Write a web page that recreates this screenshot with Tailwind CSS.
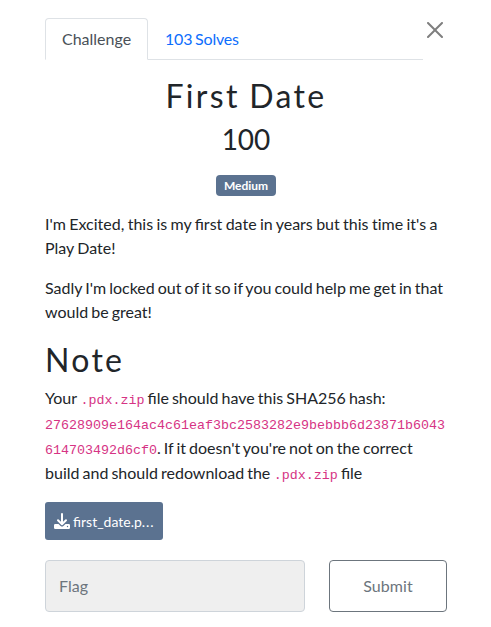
<!DOCTYPE html>
<html lang="en"><head><meta charset="utf-8"><title>First Date</title>
<script src="https://cdn.jsdelivr.net/npm/@tailwindcss/browser@4"></script></head>
<body class="bg-white text-[#212529] font-['Lato',sans-serif] text-base leading-6 overflow-hidden">
<main class="pl-[45px] pr-11 pt-[18px] [word-spacing:-1.03px]">
<div class="flex justify-between">
<nav class="flex w-[378px] h-[42px] border-b border-[#dee2e6]">
<a class="h-[42px] w-[103px] shrink-0 border border-b-white border-[#dee2e6] rounded-t bg-white px-4 py-2 text-[#495057]">Challenge</a>
<a class="px-[17px] py-[9px] text-[#0d6efd] tracking-[-0.2px]">103 Solves</a>
</nav>
<button class="w-6 h-6 flex items-center justify-center" aria-label="Close"><svg class="w-4 h-4" viewBox="0 0 16 16" fill="#7f7f7f"><path d="M.293.293a1 1 0 0 1 1.414 0L8 6.586 14.293.293a1 1 0 1 1 1.414 1.414L9.414 8l6.293 6.293a1 1 0 0 1-1.414 1.414L8 9.414l-6.293 6.293a1 1 0 0 1-1.414-1.414L6.586 8 .293 1.707a1 1 0 0 1 0-1.414z"/></svg></button>
</div>
<h2 class="mt-4 text-center text-[32px] leading-[40px] tracking-[2.35px]">First Date</h2>
<h3 class="mt-1.5 text-center text-[28px] leading-[34px]">100</h3>
<div class="mt-[19px] flex justify-center"><span class="h-[21px] w-[60px] rounded bg-[#5b7290] text-white text-xs font-bold leading-[21px] text-center">Medium</span></div>
<p class="mt-4 [word-spacing:-0.75px]">I'm Excited, this is my first date in years but this <span class="[font-variant-ligatures:none]">time</span> it's a Play Date!</p>
<p class="mt-4">Sadly I'm locked out of it so if you could help me get in that would be great!</p>
<h2 class="mt-[17px] text-[32px] leading-[38px] tracking-[2.3px]">Note</h2>
<p class="mt-1.5 leading-[25px] wrap-break-word [word-spacing:-1.05px]">Your <code class="ml-[0.7px] font-['Liberation_Mono',monospace] text-[13.33px] leading-none text-[#d63384]">.pdx.zip</code> file should have this SHA256 hash: <code class="font-['Liberation_Mono',monospace] text-[13.33px] leading-none text-[#d63384]">27628909e164ac4c61eaf3bc2583282e9bebbb6d23871b6043614703492d6cf0</code>. If it doesn't you're not on the correct build and should redownload the <code class="ml-[0.5px] font-['Liberation_Mono',monospace] text-[13.33px] leading-none text-[#d63384]">.pdx.zip</code> file</p>
<a class="mt-[17px] flex h-[38px] w-[118px] items-center rounded-[3px] bg-[#5b7290] pl-[9px] pt-px text-sm text-white whitespace-nowrap">
<svg class="mr-[3px] mb-px h-4 w-4 shrink-0" viewBox="0 0 16 16" fill="none"><path d="M0 12.2Q0 11 1.2 11H4.5L6.6 13Q8 14.2 9.4 13L11.5 11H14.8Q16 11 16 12.2V14.8Q16 16 14.8 16H1.2Q0 16 0 14.8Z" fill="#fff"/><path d="M8 1V11M4 7.2L8 11.2L12 7.2" stroke="#fff" stroke-width="2" stroke-linecap="round" stroke-linejoin="round"/><circle cx="13.5" cy="13.5" r=".7" fill="#5b7290"/></svg>
<span>first_date.p<span class="tracking-[0.9px]">...</span></span></a>
<div class="mt-5 flex gap-6">
<input class="h-[52px] w-[260px] rounded border border-[#ced4da] bg-[#efefef] px-[13px] pb-0.5 placeholder:text-[#6c757d] placeholder:opacity-100" placeholder="Flag" disabled>
<button class="h-[52px] w-[118px] rounded border border-[#6c757d] text-[#6c757d] tracking-[0.05px]">Submit</button>
</div>
</main></body></html>
